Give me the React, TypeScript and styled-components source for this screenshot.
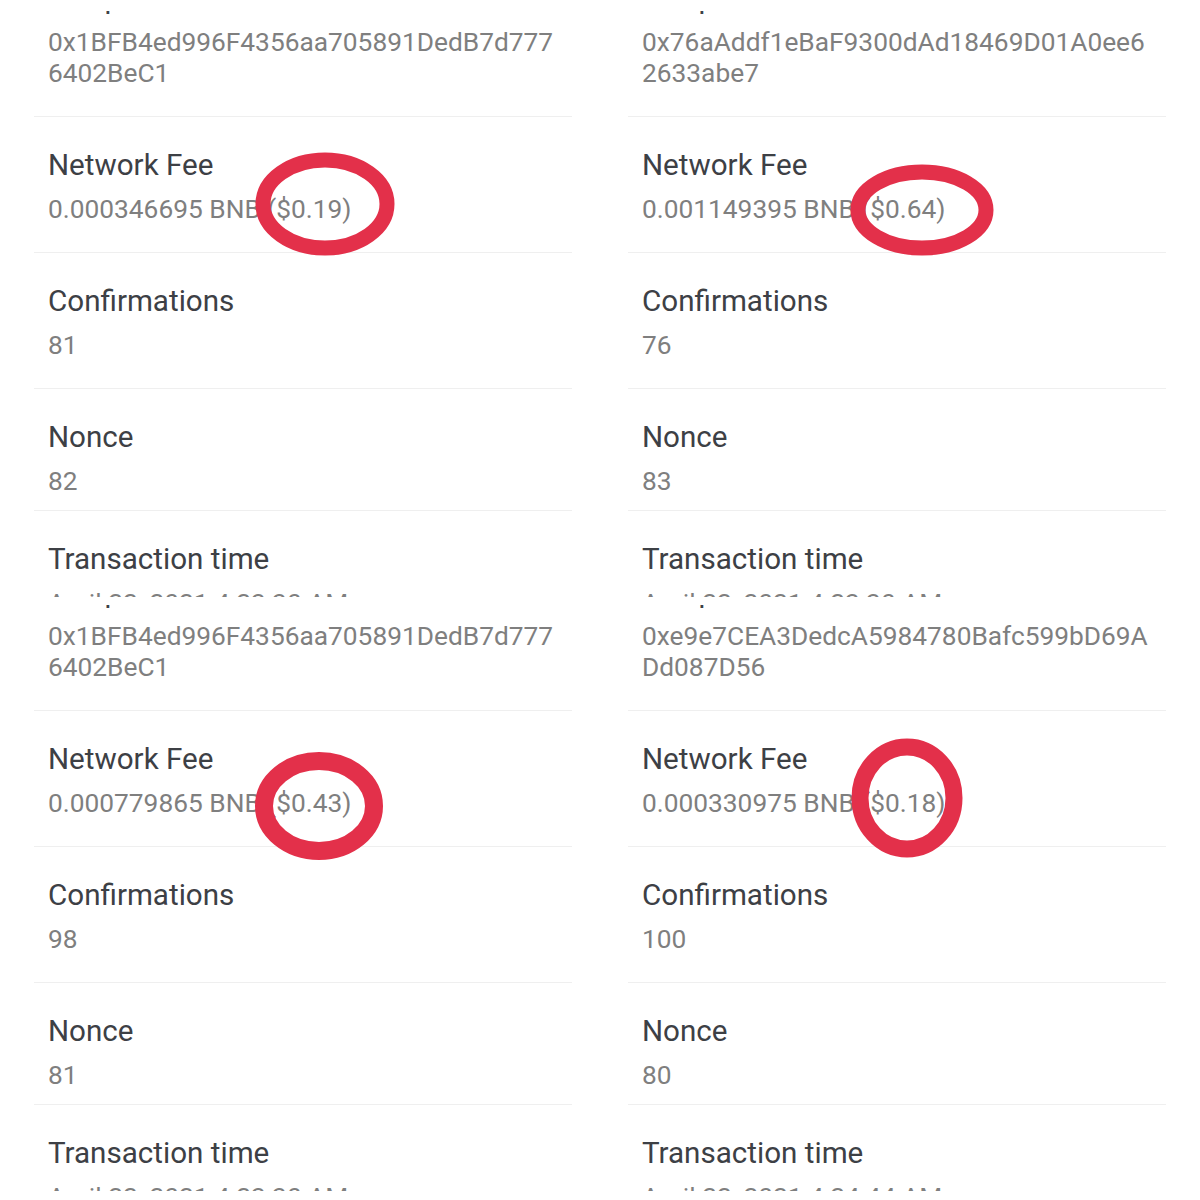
import React from 'react'
import styled, { createGlobalStyle } from 'styled-components'

const Global = createGlobalStyle`
    body {
        margin: 0;
        background: #ffffff;
        font-family: Roboto, 'Noto Sans', sans-serif;
    }
`

const Grid = styled.div`
    display: grid;
    grid-template-columns: 594px 594px;
    grid-template-rows: 594px 594px;
    width: 1200px;
    height: 1200px;
    background: #ffffff;
`

const Panel = styled.section`
    position: relative;
    height: 594px;
    padding-top: 11px;
    box-sizing: border-box;
`

const Viewport = styled.div`
    height: 586px;
    overflow: hidden;
`

const List = styled.div`
    display: flex;
    flex-direction: column;
    margin: -61px 22px 0 34px;
`

const Row = styled.div<{ $tight?: boolean; $last?: boolean }>`
    display: flex;
    flex-direction: column;
    gap: 12px;
    padding: 31px 0 ${(p) => (p.$tight ? '13px' : '27px')} 14px;
    border-bottom: ${(p) => (p.$last ? 'none' : '1px solid #efefef')};
`

const Label = styled.div`
    font-size: 29.6px;
    line-height: 34px;
    color: #3d4045;
`

const Value = styled.div`
    font-size: 26.3px;
    line-height: 31px;
    color: #7f7f7f;
    white-space: nowrap;
`

const Circle = styled.svg`
    position: absolute;
    pointer-events: none;
    overflow: visible;
`

type Mark = { cx: number; cy: number; rx: number; ry: number; w: number }

type Tx = {
    address: string[]
    fee: string
    confirmations: string
    nonce: string
    time: string
    mark: Mark
}

const txs: Tx[] = [
    {
        address: ['0x1BFB4ed996F4356aa705891DedB7d777', '6402BeC1'],
        fee: '0.000346695 BNB ($0.19)',
        confirmations: '81',
        nonce: '82',
        time: 'April 22, 2021 4:23:30 AM',
        mark: { cx: 325, cy: 204, rx: 62, ry: 44, w: 15 },
    },
    {
        address: ['0x76aAddf1eBaF9300dAd18469D01A0ee6', '2633abe7'],
        fee: '0.001149395 BNB ($0.64)',
        confirmations: '76',
        nonce: '83',
        time: 'April 22, 2021 4:23:30 AM',
        mark: { cx: 328, cy: 210, rx: 64, ry: 38, w: 15 },
    },
    {
        address: ['0x1BFB4ed996F4356aa705891DedB7d777', '6402BeC1'],
        fee: '0.000779865 BNB ($0.43)',
        confirmations: '98',
        nonce: '81',
        time: 'April 22, 2021 4:23:30 AM',
        mark: { cx: 319, cy: 212, rx: 55, ry: 45, w: 18 },
    },
    {
        address: ['0xe9e7CEA3DedcA5984780Bafc599bD69A', 'Dd087D56'],
        fee: '0.000330975 BNB ($0.18)',
        confirmations: '100',
        nonce: '80',
        time: 'April 22, 2021 4:24:44 AM',
        mark: { cx: 313, cy: 204, rx: 47, ry: 51, w: 17 },
    },
]

function Ring({ mark }: { mark: Mark }) {
    const pad = mark.w
    const width = (mark.rx + pad) * 2
    const height = (mark.ry + pad) * 2
    return (
        <Circle
            width={width}
            height={height}
            style={{ left: mark.cx - width / 2, top: mark.cy - height / 2 }}
        >
            <ellipse
                cx={width / 2}
                cy={height / 2}
                rx={mark.rx}
                ry={mark.ry}
                fill="none"
                stroke="#e3304a"
                strokeWidth={mark.w}
            />
        </Circle>
    )
}

function Details({ tx }: { tx: Tx }) {
    return (
        <Panel>
            <Viewport>
                <List>
                    <Row>
                        <Label>Recipient</Label>
                        <Value>
                            {tx.address[0]}
                            <br />
                            {tx.address[1]}
                        </Value>
                    </Row>
                    <Row>
                        <Label>Network Fee</Label>
                        <Value>{tx.fee}</Value>
                    </Row>
                    <Row>
                        <Label>Confirmations</Label>
                        <Value>{tx.confirmations}</Value>
                    </Row>
                    <Row $tight>
                        <Label>Nonce</Label>
                        <Value>{tx.nonce}</Value>
                    </Row>
                    <Row $last>
                        <Label>Transaction time</Label>
                        <Value>{tx.time}</Value>
                    </Row>
                </List>
            </Viewport>
            <Ring mark={tx.mark} />
        </Panel>
    )
}

export default function App() {
    return (
        <>
            <Global />
            <Grid>
                {txs.map((tx, i) => (
                    <Details key={i} tx={tx} />
                ))}
            </Grid>
        </>
    )
}
